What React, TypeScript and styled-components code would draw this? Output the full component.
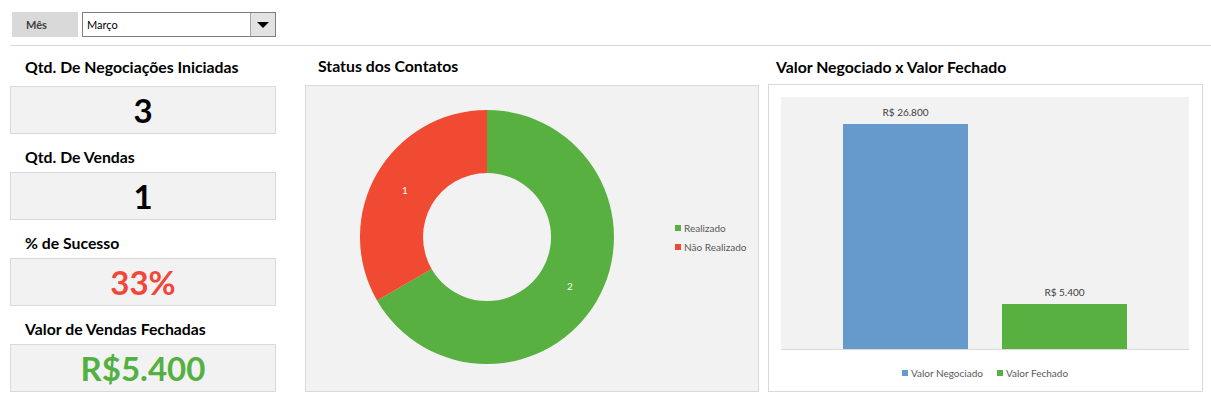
import React from 'react'
import styled, { createGlobalStyle } from 'styled-components'

const GREEN = '#57b03f'
const RED = '#f14a32'
const BLUE = '#6699cc'

const GlobalStyle = createGlobalStyle`
  body {
    margin: 0;
    background: #ffffff;
    font-family: Lato, "Open Sans", Arial, sans-serif;
  }
`

const Page = styled.div`
  width: 1211px;
  height: 402px;
  box-sizing: border-box;
  padding: 12px 0 0 10px;
  overflow: hidden;
`

const TopBar = styled.div`
  display: flex;
  gap: 4px;
  height: 25px;
  margin-left: 2px;
`

const FilterLabel = styled.div`
  width: 66px;
  background: #d9d9d9;
  color: #404040;
  font-size: 11px;
  font-weight: 700;
  display: flex;
  align-items: center;
  padding-left: 14px;
  box-sizing: border-box;
`

const Select = styled.div`
  width: 194px;
  border: 1px solid #7f7f7f;
  box-sizing: border-box;
  display: flex;
  background: #fff;
`

const SelectValue = styled.div`
  flex: 1;
  display: flex;
  align-items: center;
  padding-left: 4px;
  font-size: 11px;
  color: #000;
`

const SelectButton = styled.div`
  width: 24px;
  border-left: 1px solid #a6a6a6;
  background: #e3e3e3;
  display: flex;
  align-items: center;
  justify-content: center;
`

const Caret = styled.div`
  width: 0;
  height: 0;
  border-left: 6px solid transparent;
  border-right: 6px solid transparent;
  border-top: 6px solid #000;
`

const Divider = styled.div`
  height: 1px;
  background: #d9d9d9;
  margin-top: 8px;
`

const Main = styled.div`
  display: flex;
  align-items: flex-start;
`

const Column = styled.div<{ $width: number; $offset?: number }>`
  flex: 0 0 ${p => p.$width}px;
  display: flex;
  flex-direction: column;
  margin-left: ${p => p.$offset || 0}px;
`

const Title = styled.div<{ $height: number; $bottom: number; $indent: number }>`
  height: ${p => p.$height}px;
  box-sizing: border-box;
  display: flex;
  align-items: flex-end;
  padding-bottom: ${p => p.$bottom}px;
  padding-left: ${p => p.$indent}px;
  font-size: 15.8px;
  font-weight: 700;
  line-height: 18px;
  color: #000;
  white-space: nowrap;
`

const KpiBox = styled.div<{ $color?: string }>`
  height: 48px;
  box-sizing: border-box;
  border: 1px solid #d9d9d9;
  background: #f2f2f2;
  display: flex;
  align-items: center;
  justify-content: center;
  font-size: 33px;
  font-weight: 700;
  color: ${p => p.$color || '#000'};
`

const ChartBox = styled.div<{ $height: number; $bg: string }>`
  height: ${p => p.$height}px;
  box-sizing: border-box;
  border: 1px solid #d9d9d9;
  background: ${p => p.$bg};
`

const DonutArea = styled.div`
  display: flex;
  padding: 24px 0 0 54px;
`

const Legend = styled.div<{ $row?: boolean }>`
  display: flex;
  flex-direction: ${p => (p.$row ? 'row' : 'column')};
  justify-content: center;
  gap: ${p => (p.$row ? 14 : 7)}px;
`

const DonutLegend = styled(Legend)`
  margin-left: 61px;
  margin-top: 0;
  align-self: center;
`

const LegendItem = styled.div`
  display: flex;
  align-items: center;
  gap: 3px;
  font-size: 10px;
  line-height: 12px;
  color: #595959;
  white-space: nowrap;
`

const Swatch = styled.span<{ $color: string }>`
  width: 6px;
  height: 6px;
  background: ${p => p.$color};
`

const BarArea = styled.div`
  padding: 12px 13px 0 12px;
  display: flex;
  flex-direction: column;
`

const Plot = styled.div`
  height: 253px;
  box-sizing: border-box;
  background: #f2f2f2;
  border-bottom: 1px solid #d9d9d9;
  display: flex;
  align-items: flex-end;
  justify-content: center;
  gap: 34px;
`

const BarColumn = styled.div`
  display: flex;
  flex-direction: column;
  align-items: center;
`

const BarLabel = styled.div`
  font-size: 10px;
  line-height: 12px;
  color: #404040;
  margin-bottom: 6px;
`

const Bar = styled.div<{ $color: string }>`
  width: 125px;
  background: ${p => p.$color};
`

const BarLegend = styled(Legend)`
  margin-top: 17px;
`

const Donut = () => (
  <svg width="254" height="254" viewBox="0 0 254 254">
    <path d="M127 0 A127 127 0 1 1 17 190.5 L71.6 159 A64 64 0 1 0 127 63 Z" fill={GREEN} />
    <path d="M17 190.5 A127 127 0 0 1 127 0 L127 63 A64 64 0 0 0 71.6 159 Z" fill={RED} />
    <text x="45" y="80" fill="#fff" fontSize="10" fontFamily="Lato, sans-serif" textAnchor="middle" dominantBaseline="central">1</text>
    <text x="210" y="176" fill="#fff" fontSize="10" fontFamily="Lato, sans-serif" textAnchor="middle" dominantBaseline="central">2</text>
  </svg>
)

const kpis = [
  { title: 'Qtd. De Negociações Iniciadas', value: '3' },
  { title: 'Qtd. De Vendas', value: '1' },
  { title: '% de Sucesso', value: '33%', color: '#f0473a' },
  { title: 'Valor de Vendas Fechadas', value: 'R$5.400', color: '#53b043' },
]

const bars = [
  { label: 'R$ 26.800', value: 26800, color: BLUE, name: 'Valor Negociado' },
  { label: 'R$ 5.400', value: 5400, color: GREEN, name: 'Valor Fechado' },
]

const AXIS_MAX = 30000
const PLOT_HEIGHT = 252

export default function App() {
  return (
    <Page>
      <GlobalStyle />
      <TopBar>
        <FilterLabel>Mês</FilterLabel>
        <Select>
          <SelectValue>Março</SelectValue>
          <SelectButton>
            <Caret />
          </SelectButton>
        </Select>
      </TopBar>
      <Divider />
      <Main>
        <Column $width={266}>
          {kpis.map((k, i) => (
            <React.Fragment key={k.title}>
              <Title $height={i === 0 ? 40 : 38} $bottom={i === 0 ? 10 : 6} $indent={15}>
                {k.title}
              </Title>
              <KpiBox $color={k.color}>{k.value}</KpiBox>
            </React.Fragment>
          ))}
        </Column>
        <Column $width={454} $offset={29}>
          <Title $height={39} $bottom={10} $indent={13}>Status dos Contatos</Title>
          <ChartBox $height={307} $bg="#f2f2f2">
            <DonutArea>
              <Donut />
              <DonutLegend>
                <LegendItem><Swatch $color={GREEN} />Realizado</LegendItem>
                <LegendItem><Swatch $color={RED} />Não Realizado</LegendItem>
              </DonutLegend>
            </DonutArea>
          </ChartBox>
        </Column>
        <Column $width={435} $offset={9}>
          <Title $height={38} $bottom={8} $indent={8}>Valor Negociado x Valor Fechado</Title>
          <ChartBox $height={308} $bg="#ffffff">
            <BarArea>
              <Plot>
                {bars.map(b => (
                  <BarColumn key={b.name}>
                    <BarLabel>{b.label}</BarLabel>
                    <Bar $color={b.color} style={{ height: Math.round((b.value / AXIS_MAX) * PLOT_HEIGHT) }} />
                  </BarColumn>
                ))}
              </Plot>
              <BarLegend $row>
                {bars.map(b => (
                  <LegendItem key={b.name}><Swatch $color={b.color} />{b.name}</LegendItem>
                ))}
              </BarLegend>
            </BarArea>
          </ChartBox>
        </Column>
      </Main>
    </Page>
  )
}
